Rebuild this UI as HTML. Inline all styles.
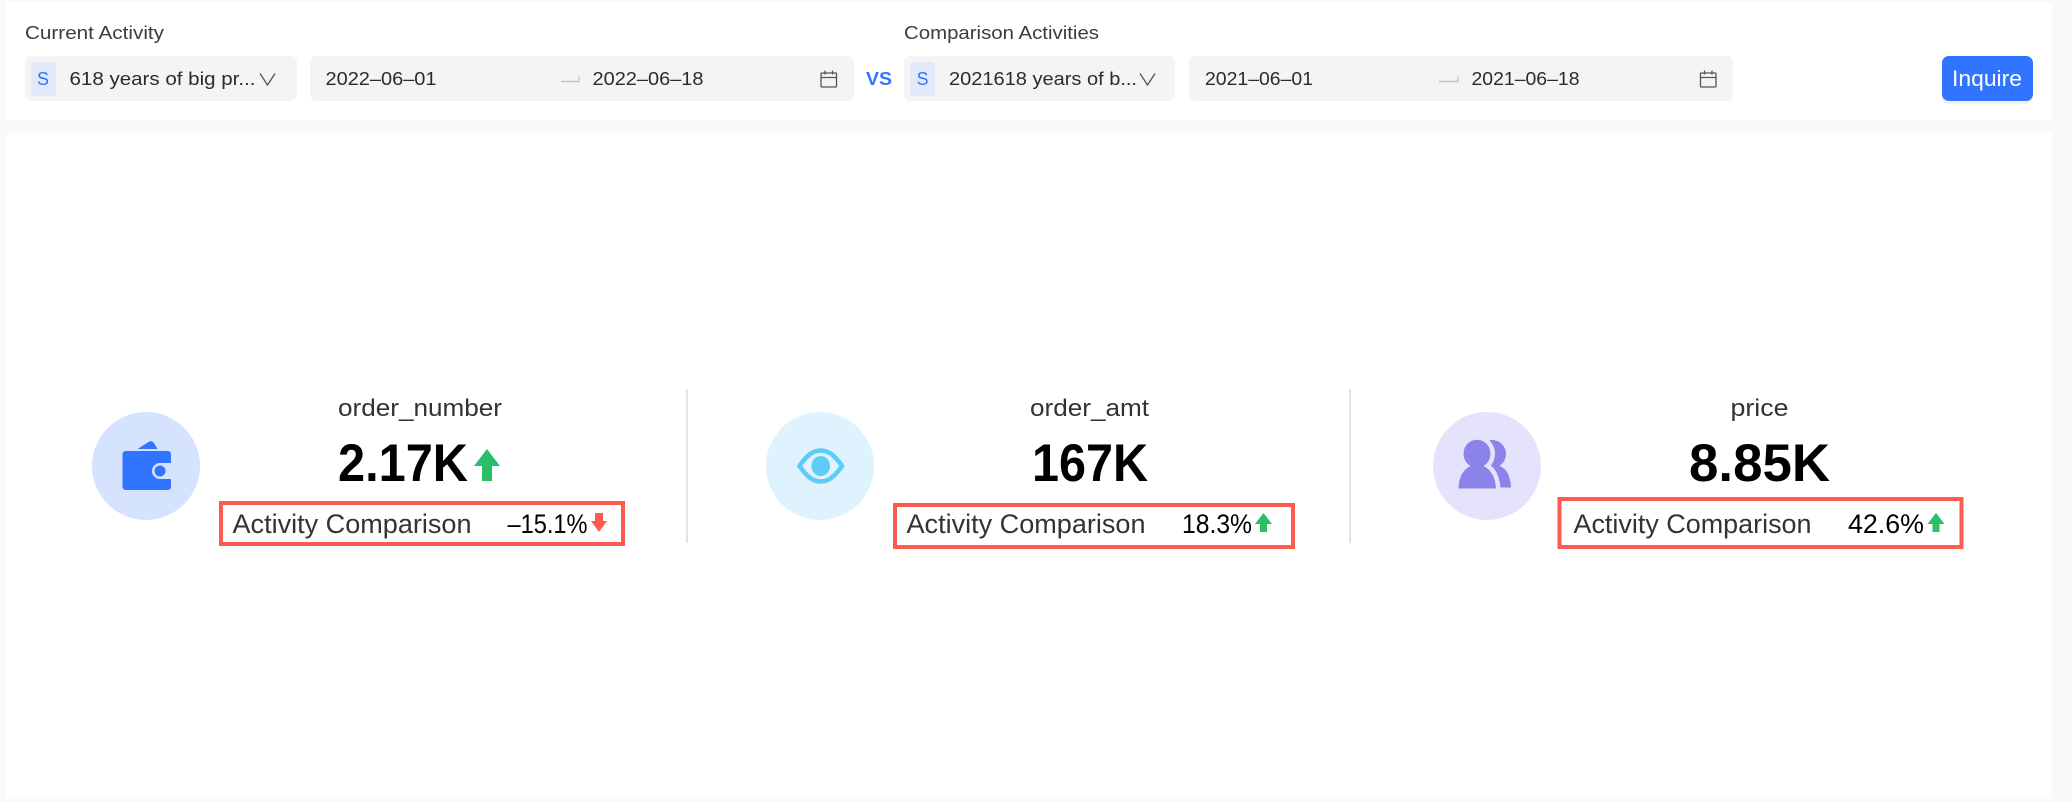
<!DOCTYPE html>
<html lang="en">
<head>
<meta charset="utf-8">
<title>Activity Comparison</title>
<style>
html,body{margin:0;padding:0;width:2072px;height:802px;overflow:hidden;background:#f9f9f9}
svg{display:block}
text{font-family:"Liberation Sans",Arial,sans-serif;white-space:pre}
.lb{font-size:18px;fill:#3c3c3c}
.tx{font-size:18px;fill:#2b2b2b}
.s{font-size:18px;fill:#3273ff}
.nm{font-size:24px;fill:#333}
.val{font-size:53px;font-weight:700;fill:#000}
.cmp{font-size:27px;fill:#333}
.pct{font-size:27px;fill:#000}
</style>
</head>
<body>
<svg width="2072" height="802" viewBox="0 0 2072 802" xmlns="http://www.w3.org/2000/svg">
<rect width="2072" height="802" fill="#f9f9f9"/>
<rect x="6" y="2" width="2046" height="118" fill="#fff"/>
<rect x="6" y="133" width="2046" height="666" fill="#fff"/>

<!-- Current Activity -->
<text class="lb" x="25" y="39" textLength="139" lengthAdjust="spacingAndGlyphs">Current Activity</text>
<rect x="25" y="56" width="272" height="45" rx="7" fill="#f4f4f4"/>
<rect x="31" y="62" width="25" height="34" rx="3" fill="#e3e9f8"/>
<text class="s" x="37" y="85" textLength="12" lengthAdjust="spacingAndGlyphs">S</text>
<text class="tx" x="69.500" y="85" textLength="186" lengthAdjust="spacingAndGlyphs">618 years of big pr...</text>
<path d="M260 73.500L267.500 85L275 73.500" fill="none" stroke="#555" stroke-width="1.300"/>
<rect x="310" y="56" width="544" height="45" rx="7" fill="#f4f4f4"/>
<text class="tx" x="325.500" y="85" textLength="111" lengthAdjust="spacingAndGlyphs">2022–06–01</text>
<path d="M561 81.500H579V76.500" fill="none" stroke="#c4c4c4" stroke-width="1.500"/>
<text class="tx" x="592.500" y="85" textLength="111" lengthAdjust="spacingAndGlyphs">2022–06–18</text>
<g fill="none" stroke="#555" stroke-width="1.300"><rect x="821" y="73" width="15.500" height="14" rx="1"/><path d="M821 77.500H836.500M825 70.500V74.500M832.500 70.500V74.500"/></g>

<text x="866" y="85" font-size="18" font-weight="700" fill="#3273ff" textLength="26" lengthAdjust="spacingAndGlyphs">VS</text>

<!-- Comparison Activities -->
<text class="lb" x="904" y="39" textLength="195" lengthAdjust="spacingAndGlyphs">Comparison Activities</text>
<rect x="904" y="56" width="271" height="45" rx="7" fill="#f4f4f4"/>
<rect x="910" y="62" width="25" height="34" rx="3" fill="#e3e9f8"/>
<text class="s" x="916.500" y="85" textLength="12" lengthAdjust="spacingAndGlyphs">S</text>
<text class="tx" x="949" y="85" textLength="188" lengthAdjust="spacingAndGlyphs">2021618 years of b...</text>
<path d="M1140 73.500L1147.500 85L1155 73.500" fill="none" stroke="#555" stroke-width="1.300"/>
<rect x="1189" y="56" width="544" height="45" rx="7" fill="#f4f4f4"/>
<text class="tx" x="1205" y="85" textLength="108" lengthAdjust="spacingAndGlyphs">2021–06–01</text>
<path d="M1439 81.500H1458V76.500" fill="none" stroke="#c4c4c4" stroke-width="1.500"/>
<text class="tx" x="1471.500" y="85" textLength="108" lengthAdjust="spacingAndGlyphs">2021–06–18</text>
<g fill="none" stroke="#555" stroke-width="1.300"><rect x="1700.500" y="73" width="15.500" height="14" rx="1"/><path d="M1700.500 77.500H1716M1704.500 70.500V74.500M1712 70.500V74.500"/></g>

<rect x="1942" y="59" width="91" height="45" rx="7" fill="#f0f0f0"/>
<rect x="1942" y="56" width="91" height="45" rx="7" fill="#3074ff"/>
<text x="1952" y="86" font-size="22" fill="#fff" textLength="70" lengthAdjust="spacingAndGlyphs">Inquire</text>

<!-- Metric 1 -->
<circle cx="146" cy="466" r="54" fill="#d6e3ff"/>
<path d="M137.500 449L148.500 442Q151.500 440 153.500 442.500L157.500 449Z" fill="#3074ff"/>
<path d="M126 451H167.500Q171 451 171 454.500V463H160a8 8 0 0 0 0 16H171V486.500Q171 490 167.500 490H126Q122.500 490 122.500 486.500V454.500Q122.500 451 126 451Z" fill="#3074ff"/>
<circle cx="160" cy="471" r="5.500" fill="#3074ff"/>
<text class="nm" x="338" y="416" textLength="164" lengthAdjust="spacingAndGlyphs">order_number</text>
<text class="val" x="338" y="481" textLength="130" lengthAdjust="spacingAndGlyphs">2.17K</text>
<path d="M487 449L500 466H492V481H482V466H474Z" fill="#28bf68"/>
<rect x="221" y="503" width="402" height="41" fill="none" stroke="#ff5a4f" stroke-width="4"/>
<text class="cmp" x="232.500" y="533" textLength="239" lengthAdjust="spacingAndGlyphs">Activity Comparison</text>
<text class="pct" x="507.500" y="533" textLength="80" lengthAdjust="spacingAndGlyphs">–15.1%</text>
<path d="M599 532L607 521H603V513H595V521H591Z" fill="#ff5a4f"/>
<rect x="686" y="389" width="2" height="154" fill="#e4e4e4"/>

<!-- Metric 2 -->
<circle cx="820" cy="466" r="54" fill="#dff3fe"/>
<path d="M799.500 466C807 455 813 450.500 820.700 450.500S834.500 455 842 466C834.500 477 828 481.500 820.700 481.500S807 477 799.500 466Z" fill="none" stroke="#5ecbf8" stroke-width="4.500"/>
<ellipse cx="820.700" cy="466" rx="9.300" ry="10" fill="#5ecbf8"/>
<text class="nm" x="1030" y="416" textLength="119" lengthAdjust="spacingAndGlyphs">order_amt</text>
<text class="val" x="1032" y="481" textLength="116" lengthAdjust="spacingAndGlyphs">167K</text>
<rect x="895" y="505" width="398" height="42" fill="none" stroke="#ff5a4f" stroke-width="4"/>
<text class="cmp" x="906.500" y="533" textLength="239" lengthAdjust="spacingAndGlyphs">Activity Comparison</text>
<text class="pct" x="1182" y="533" textLength="70" lengthAdjust="spacingAndGlyphs">18.3%</text>
<path d="M1263.500 513L1272 524H1267V532H1260V524H1255Z" fill="#28bf68"/>
<rect x="1349" y="389" width="2" height="154" fill="#e4e4e4"/>

<!-- Metric 3 -->
<circle cx="1487" cy="466" r="54" fill="#e5e2fc"/>
<circle cx="1492" cy="454" r="14" fill="#8b83ea"/>
<path d="M1488 466H1500Q1510 470 1511 487.500H1494Z" fill="#8b83ea"/>
<g fill="#8b83ea" stroke="#e5e2fc" stroke-width="9" paint-order="stroke" stroke-linejoin="round">
<path d="M1458.500 488.500q.5-17 12-22.500a13.500 14 0 1 1 13 0q11.500 5.500 12.500 22.500Z"/>
</g>
<text class="nm" x="1730.500" y="416" textLength="58" lengthAdjust="spacingAndGlyphs">price</text>
<text class="val" x="1689" y="481" textLength="141" lengthAdjust="spacingAndGlyphs">8.85K</text>
<rect x="1559.500" y="499" width="402" height="48" fill="none" stroke="#ff5a4f" stroke-width="4"/>
<text class="cmp" x="1573.500" y="533" textLength="238" lengthAdjust="spacingAndGlyphs">Activity Comparison</text>
<text class="pct" x="1848" y="533" textLength="76" lengthAdjust="spacingAndGlyphs">42.6%</text>
<path d="M1936 513L1944.500 524H1939.500V532H1932.500V524H1927.500Z" fill="#28bf68"/>
</svg>
</body>
</html>
